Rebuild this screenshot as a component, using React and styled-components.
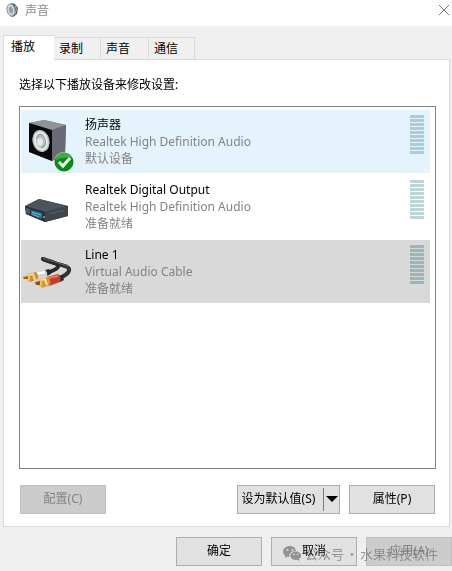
import React, { useState } from 'react';
import styled, { createGlobalStyle } from 'styled-components';

const GlobalStyle = createGlobalStyle`
    * {
        box-sizing: border-box;
    }

    body {
        margin: 0;
        background-color: #efefef;
        font-family: 'Noto Sans', 'Noto Sans CJK SC', sans-serif;
        font-size: 12px;
        line-height: 17px;
        color: #000;
    }

    button {
        font: inherit;
        color: inherit;
    }
`;

const Dialog = styled.main`
    position: relative;
    display: flex;
    flex-direction: column;
`;

const TitleBar = styled.header`
    display: flex;
    align-items: center;
    height: 26px;
    padding: 0 2px 6px 6px;
    background-color: #fff;
`;

const Title = styled.h1`
    flex: 1;
    margin: 0 0 0 6px;
    font-size: 12px;
    font-weight: 400;
    color: #888;
`;

const CloseButton = styled.button`
    display: flex;
    padding: 0;
    border: 0;
    background: none;
`;

const TabList = styled.div`
    display: flex;
    align-items: flex-end;
    height: 33px;
    padding-left: 3px;
`;

const Tab = styled.button`
    width: ${({ $width }) => $width}px;
    height: ${({ $active }) => ($active ? 25 : 22)}px;
    margin-bottom: ${({ $active }) => ($active ? -1 : 0)}px;
    padding: 0 0 ${({ $active }) => ($active ? 3 : 0)}px ${({ $active }) => ($active ? 7 : 5)}px;
    border: 1px solid #d9d9d9;
    border-width: ${({ $active }) => ($active ? '1px 0 0 1px' : '1px 1px 0 0')};
    background-color: ${({ $active }) => ($active ? '#fff' : '#f0f0f0')};
    text-align: left;
    z-index: 1;
`;

const Panel = styled.section`
    display: flex;
    flex-direction: column;
    margin: 0 2px 0 3px;
    padding: 16px 13px 12px 15px;
    border: 1px solid #d9d9d9;
    background-color: #fff;
`;

const Hint = styled.p`
    margin: 0 0 13px;
`;

const DeviceList = styled.ul`
    display: flex;
    flex-direction: column;
    gap: 2px;
    min-height: 363px;
    margin: 0;
    padding: 3px 5px 3px 1px;
    border: 1px solid #828282;
    list-style: none;
`;

const rowColors = {
    hover: '#e5f3fc',
    selected: '#d9d9d9',
    plain: '#fff'
};

const DeviceRow = styled.li`
    display: flex;
    height: 63px;
    padding: 5px 6px 5px 2px;
    background-color: ${({ $state }) => rowColors[$state]};
`;

const DeviceIcon = styled.div`
    width: 62px;

    svg {
        display: block;
    }
`;

const DeviceText = styled.div`
    flex: 1;
    padding-top: 1px;
    color: #838383;
`;

const DeviceName = styled.div`
    color: #000;
`;

const Meter = styled.div`
    display: flex;
    flex-direction: column;
    gap: 1px;
    width: 14px;
`;

const MeterBar = styled.span`
    height: 3px;
    background-color: ${({ $color }) => $color};
`;

const PanelActions = styled.div`
    display: flex;
    gap: 9px;
    margin-top: 16px;
    padding: 0 1px;
`;

const Button = styled.button`
    width: 86px;
    height: 29px;
    padding: 0 0 2px;
    border: 1px solid #adadad;
    background-color: #e1e1e1;

    &:disabled {
        border-color: #bfbfbf;
        background-color: #ccc;
        color: #838383;
    }
`;

const ConfigureButton = styled(Button)`
    margin-right: auto;
`;

const SplitButton = styled.div`
    display: flex;
    width: 103px;
    height: 29px;
    border: 1px solid #adadad;
    background-color: #e1e1e1;
`;

const SplitMain = styled.button`
    flex: 1;
    padding: 0 4px 2px 0;
    border: 0;
    background: none;
    white-space: nowrap;
`;

const SplitArrow = styled.button`
    display: flex;
    align-items: center;
    width: 16px;
    margin: 2px 0;
    padding: 0 0 0 2px;
    border: 0;
    border-left: 1px solid #777;
    background: none;
`;

const Footer = styled.footer`
    display: flex;
    justify-content: flex-end;
    gap: 9px;
    padding: 10px 0 6px;
`;

const Watermark = styled.div`
    position: absolute;
    right: 14px;
    bottom: 10px;
    display: flex;
    align-items: center;
    font-family: 'Noto Sans CJK SC', sans-serif;
    font-size: 13px;
    color: #777;
    opacity: 0.75;
    mix-blend-mode: darken;
    pointer-events: none;

    svg {
        margin-right: 4px;
    }
`;

const WatermarkDot = styled.span`
    width: 16px;
    text-align: center;
`;

const SoundIcon = () => (
    <svg width="13" height="16" viewBox="0 0 13 16" aria-hidden="true">
        <path d="M5 1 9 2 12 6 11 12 7 15 4 14Z" fill="#505a61" />
        <ellipse cx="5" cy="8" rx="4" ry="6" fill="#d5dadd" stroke="#87929a" transform="rotate(-12 5 8)" />
        <ellipse cx="5" cy="8" rx="2" ry="3.5" fill="#8fa0aa" transform="rotate(-12 5 8)" />
        <path d="M9 3q3 4 0 9" fill="none" stroke="#9caab2" />
    </svg>
);

const CloseIcon = () => (
    <svg width="12" height="12" viewBox="0 0 12 12" aria-hidden="true">
        <path d="M1 1 11 11M11 1 1 11" stroke="#777" fill="none" />
    </svg>
);

const SpeakerIcon = () => (
    <svg width="52" height="58" viewBox="0 0 52 58" aria-hidden="true">
        <path d="M6 8 21 5 43 10 42 40 29 46 6 37Z" fill="#777981" />
        <path d="M6 8 21 5 43 10 29 15Z" fill="#929399" />
        <path d="M29 15 43 10 42 40 29 46Z" fill="#696a76" />
        <path d="M6 8 29 15V46L6 37Z" fill="#080a0b" />
        <ellipse cx="18" cy="26" rx="8" ry="10.500" fill="#d8dddd" stroke="#b9c0c0" transform="rotate(-14 18 26)" />
        <ellipse cx="18" cy="26" rx="5.500" ry="8" fill="#9aa6a6" stroke="#f2f4f4" transform="rotate(-14 18 26)" />
        <path d="M17 20q6 2 5 8l-4 5q-5-2-5-8Z" fill="#b8c1c1" />
        <ellipse cx="17" cy="27" rx="3" ry="4" fill="#e4e8e8" />
        <circle cx="41" cy="47" r="10" fill="#e9f6ed" />
        <circle cx="41" cy="47" r="9" fill="#079017" stroke="#057411" />
        <path d="M33 43q3-6 9-5 5 0 7 5-8-2-16 2Z" fill="#40ad42" />
        <path d="m36 47 4 4 7-8" fill="none" stroke="#fff" strokeWidth="3" />
    </svg>
);

const DigitalIcon = () => (
    <svg width="52" height="54" viewBox="0 0 52 54" aria-hidden="true">
        <path d="M2 26 16 19 45 26 45 36 22 42 3 34Z" fill="#353d43" />
        <path d="M2 26 16 19 45 26 22 32Z" fill="#4c545c" />
        <path d="M22 32 45 26V36L22 42Z" fill="#3e464d" />
        <path d="m2 26 20 6v10L3 34Z" fill="#273139" />
        <path d="m8 30 11 3v6L8 35Z" fill="#236f98" />
        <path d="m9 32 9 3M9 34l7 3" stroke="#68b9d7" />
        <path d="M4 28v5M6 29v5" stroke="#6f8796" />
        <circle cx="21" cy="37" r="1" fill="#9aa5aa" />
        <path d="m26 34 16-4" stroke="#59626a" />
    </svg>
);

const CableIcon = () => (
    <svg width="52" height="54" viewBox="0 0 52 54" aria-hidden="true">
        <path
            d="M20 14C30 19 45 20 46 24S41 31 35 34"
            fill="none"
            stroke="#303336"
            strokeWidth="4"
            strokeLinecap="round"
        />
        <path
            d="M20 14C29 17 37 19 35 22S29 26 24 28"
            fill="none"
            stroke="#292c2f"
            strokeWidth="4"
            strokeLinecap="round"
        />
        <path d="M20 13C29 17 43 19 45 22" fill="none" stroke="#66696d" />
        <path d="m22 25 4-1 2 5-4 2Z" fill="#27282a" />
        <path d="m12 28 10-3q3 2 2 6l-9 3Z" fill="#d2d2d6" />
        <path d="m13 29 9-2" stroke="#fff" strokeWidth="2" />
        <path d="m5 29 8-2q3 3 2 7l-8 3q-4-3-2-8Z" fill="#c8923c" />
        <path d="m10 29 2 6M6 30l5-1" stroke="#f7d98d" strokeWidth="2" />
        <ellipse cx="5" cy="33" rx="2" ry="4" fill="#efc675" />
        <path d="m0 32 5-1v3H1Z" fill="#99631c" />
        <path d="m35 31 4-1 2 5-4 2Z" fill="#292929" />
        <path d="m24 32 11-3q4 3 2 8l-11 4Z" fill="#c23e29" />
        <path d="m25 33 10-2" stroke="#ee7860" strokeWidth="2" />
        <path d="m17 34 8-2q3 4 2 8l-8 3q-4-3-2-9Z" fill="#d39740" />
        <path d="m22 34 2 6M18 35l5-1" stroke="#ffe0a2" strokeWidth="2" />
        <ellipse cx="17" cy="38" rx="2" ry="4" fill="#ebc06a" />
        <path d="m12 37 5-1v4h-4Z" fill="#88591b" />
    </svg>
);

const ArrowIcon = () => (
    <svg width="12" height="7" viewBox="0 0 12 7" aria-hidden="true">
        <path d="M0 0H12L6 6Z" fill="#000" />
    </svg>
);

const ChatIcon = () => (
    <svg width="18" height="15" viewBox="0 0 18 15" aria-hidden="true">
        <path
            fill="#777"
            fillRule="evenodd"
            d="M7 0C3 0 0 2.500 0 5.500 0 7.200 1 8.700 2.400 9.800L2 12l2.500-1.400 2 .3C6 7.500 8.500 5 13 4.800 12.300 2 10 0 7 0ZM4.500 3a1 1 0 1 1 0 2 1 1 0 0 1 0-2Zm5 0a1 1 0 1 1 0 2 1 1 0 0 1 0-2Z"
        />
        <path
            fill="#777"
            fillRule="evenodd"
            d="M12.700 5.600C9.700 5.600 7.500 7.500 7.500 9.800s2.200 4.200 5.200 4.200l1.600-.2 2 1.200-.4-1.900C17.200 12.300 18 11.100 18 9.800c0-2.300-2.300-4.200-5.300-4.200ZM11 7.600a.8.8 0 1 1 0 1.600.8.8 0 0 1 0-1.600Zm3.600 0a.8.8 0 1 1 0 1.600.8.8 0 0 1 0-1.600Z"
        />
    </svg>
);

const tabs = [
    { name: '播放', width: 51 },
    { name: '录制', width: 47 },
    { name: '声音', width: 48 },
    { name: '通信', width: 46 }
];

const devices = [
    {
        name: '扬声器',
        driver: 'Realtek High Definition Audio',
        status: '默认设备',
        state: 'hover',
        meter: '#a9ced6',
        Icon: SpeakerIcon
    },
    {
        name: 'Realtek Digital Output',
        driver: 'Realtek High Definition Audio',
        status: '准备就绪',
        state: 'plain',
        meter: '#bdd5d5',
        Icon: DigitalIcon
    },
    {
        name: 'Line 1',
        driver: 'Virtual Audio Cable',
        status: '准备就绪',
        state: 'selected',
        meter: '#98b7b8',
        Icon: CableIcon
    }
];

const levels = Array.from({ length: 10 }, (_, i) => i);

export default () => {
    const [activeTab, setActiveTab] = useState('播放');

    return (
        <Dialog>
            <GlobalStyle />
            <TitleBar>
                <SoundIcon />
                <Title>声音</Title>
                <CloseButton aria-label="关闭"><CloseIcon /></CloseButton>
            </TitleBar>
            <TabList role="tablist">
                {tabs.map(({ name, width }) => (
                    <Tab
                        key={name}
                        role="tab"
                        aria-selected={name === activeTab}
                        $active={name === activeTab}
                        $width={width}
                        onClick={() => setActiveTab(name)}
                    >
                        {name}
                    </Tab>
                ))}
            </TabList>
            <Panel role="tabpanel">
                <Hint id="hint">选择以下播放设备来修改设置:</Hint>
                <DeviceList role="listbox" aria-labelledby="hint">
                    {devices.map(({ name, driver, status, state, meter, Icon }) => (
                        <DeviceRow key={name} role="option" aria-selected={state === 'selected'} $state={state}>
                            <DeviceIcon><Icon /></DeviceIcon>
                            <DeviceText>
                                <DeviceName>{name}</DeviceName>
                                <div>{driver}</div>
                                <div>{status}</div>
                            </DeviceText>
                            <Meter>
                                {levels.map((level) => <MeterBar key={level} $color={meter} />)}
                            </Meter>
                        </DeviceRow>
                    ))}
                </DeviceList>
                <PanelActions>
                    <ConfigureButton disabled>配置(C)</ConfigureButton>
                    <SplitButton>
                        <SplitMain>设为默认值(S)</SplitMain>
                        <SplitArrow aria-label="更多选项"><ArrowIcon /></SplitArrow>
                    </SplitButton>
                    <Button>属性(P)</Button>
                </PanelActions>
            </Panel>
            <Footer>
                <Button>确定</Button>
                <Button>取消</Button>
                <Button disabled>应用(A)</Button>
            </Footer>
            <Watermark>
                <ChatIcon />
                <span>公众号</span>
                <WatermarkDot>·</WatermarkDot>
                <span>水果科技软件</span>
            </Watermark>
        </Dialog>
    );
}
